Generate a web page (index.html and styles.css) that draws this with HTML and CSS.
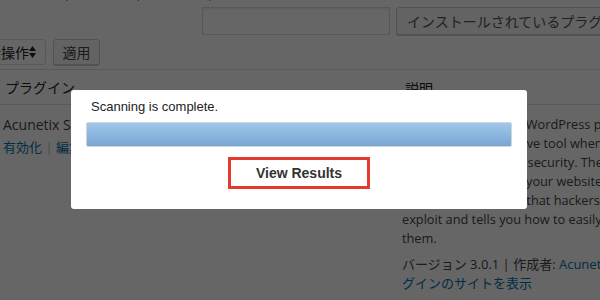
FILE: index.html
```html
<!DOCTYPE html>
<html lang="ja">
<head>
  <meta charset="UTF-8" />
  <title>プラグイン</title>
  <link rel="stylesheet" href="styles.css">
</head>
<body>
  <div class="wrap">
    <!-- status filter links, scrolled mostly out of view -->
    <div class="subsub">
      <span><a href="#">すべて (3)</a> | <a href="#">使用中 (1)</a> | <a href="#">停止中 (2)</a> | <a href="#">更新 (1)</a></span>
    </div>

    <div class="search-row">
      <input class="search-input" type="search" />
      <button class="btn">インストールされているプラグインを検索</button>
    </div>

    <div class="bulk-row">
      <div class="select">一括操作
        <svg width="7" height="12" viewBox="0 0 7 12"><path d="M3.5 0 L7 5 H0 Z M0 7 H7 L3.5 12 Z" fill="#222"/></svg>
      </div>
      <button class="btn">適用</button>
    </div>

    <div class="plugins">
      <div class="row head">
        <div class="col-name">プラグイン</div>
        <div class="col-desc">説明</div>
      </div>
      <div class="row">
        <div class="col-name">
          <div class="plugin-title">Acunetix Secure WordPress</div>
          <div class="row-actions"><a href="#">有効化</a> <span class="sep">|</span> <a href="#">編集</a></div>
        </div>
        <div class="col-desc">
          <p class="desc">The Acunetix Secure WordPress plugin<br>
          It is the comprehensive tool when it<br>
          comes to WordPress security. The<br>
          plugin actively scans your website for<br>
          security weaknesses that hackers could<br>
          exploit and tells you how to easily fix<br>
          them.</p>
          <p class="meta">バージョン 3.0.1 | 作成者: <a href="#">Acunetix</a> | <a href="#">プラ<br>グインのサイトを表示</a></p>
        </div>
      </div>
    </div>
  </div>

  <div class="overlay"></div>

  <div class="modal">
    <p class="modal-text">Scanning is complete.</p>
    <div class="progress"></div>
    <div class="modal-actions">
      <button class="results-btn">View Results</button>
    </div>
  </div>
</body>
</html>
```

FILE: styles.css
```css
/* Page base */
* { box-sizing: border-box; margin: 0; padding: 0; }
body { background: #fff; color: #444; font-family: "Open Sans", "Noto Sans CJK JP", sans-serif; font-size: 13px; overflow: hidden; width: 600px; height: 300px; }
a { color: #0073aa; text-decoration: none; }

.wrap { width: 700px; }

/* Filter links */
.subsub { height: 3px; overflow: hidden; display: flex; align-items: flex-end; padding-left: 4px; color: #555; }
.subsub span { line-height: 20px; white-space: nowrap; font-size: 13px; }

/* Search */
.search-row { display: flex; gap: 6px; margin-top: 4px; padding-left: 202px; }
.search-input { flex-shrink: 0; width: 188px; height: 28px; border: 1px solid #ddd; background: #fff; box-shadow: inset 0 1px 2px rgba(0,0,0,0.07); }
.btn { flex-shrink: 0; height: 28px; padding: 0 10px; background: #f7f7f7; border: 1px solid #ccc; border-radius: 3px; color: #555; font-family: "Open Sans", "Noto Sans CJK JP", sans-serif; font-size: 14px; white-space: nowrap; box-shadow: 0 1px 0 #ccc; }

/* Bulk actions */
.bulk-row { display: flex; gap: 7px; margin-top: 4px; margin-left: -31px; }
.select { width: 77px; height: 26px; display: flex; align-items: center; justify-content: space-between; padding: 0 9px 0 3px; border: 1px solid #ddd; border-radius: 4px; background: #fff; color: #222; font-size: 14px; white-space: nowrap; }
.bulk-row .btn { height: 26px; width: 47px; padding: 0; color: #444; }

/* Plugin table */
.plugins { margin-top: 4px; border-top: 1px solid #e1e1e1; }
.row { display: grid; grid-template-columns: 402px 1fr; }
.row.head { height: 35px; border-bottom: 1px solid #e1e1e1; align-items: center; font-size: 14px; color: #222; }
.row.head .col-name { padding-left: 5px; }
.row.head .col-desc { padding-left: 3px; padding-top: 2px; }
.col-name { padding-left: 3px; }
.plugin-title { font-size: 14px; color: #444; margin-top: 10px; line-height: 20px; white-space: nowrap; }
.row-actions { margin-top: 2px; font-size: 13px; line-height: 20px; }
.row-actions .sep { color: #bbb; }
.col-desc { padding-top: 10px; white-space: nowrap; }
.desc { line-height: 19px; font-size: 12.75px; color: #444; }
.meta { margin-top: 7px; line-height: 19px; font-size: 13px; color: #444; }

/* Dim layer */
.overlay { position: fixed; inset: 0; background: rgba(0,0,0,0.6); }

/* Dialog */
.modal { position: fixed; left: 71px; top: 90px; width: 456px; height: 119px; background: #fff; border-radius: 3px; padding: 9px 15px 20px; font-family: "Liberation Sans", Arial, sans-serif; }
.modal-text { margin-left: 5px; font-size: 13px; line-height: 16px; color: #222; }
.progress { margin-top: 7px; height: 25px; border: 1px solid #d4d4d4; border-radius: 2px; background: linear-gradient(#9fc7ec, #78a6d3); }
.modal-actions { display: flex; justify-content: center; margin-top: 10px; }
.results-btn { width: 142px; height: 32px; background: #fff; border: 3px solid #e53a2d; color: #333; font-family: "Liberation Sans", Arial, sans-serif; font-size: 14px; font-weight: bold; }
```
